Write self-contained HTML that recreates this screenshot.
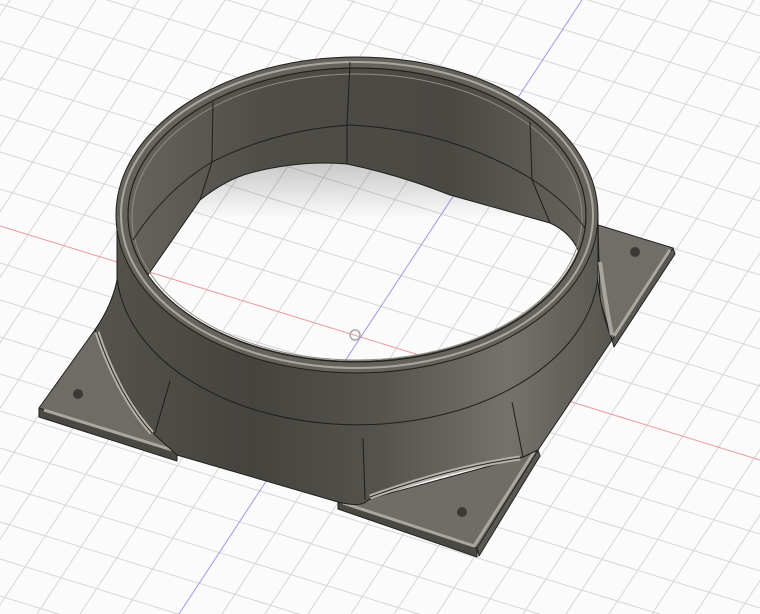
<!DOCTYPE html>
<html><head><meta charset="utf-8"><style>html,body{margin:0;padding:0;background:#fbfbfb;overflow:hidden;width:760px;height:614px}svg{display:block}</style></head>
<body>
<svg width="760" height="614" viewBox="0 0 760 614" xmlns="http://www.w3.org/2000/svg">
<defs>
<g id="grid" stroke="#d6d6d6" stroke-width="1" fill="none">
<path d="M0,-329 L760,-95 M0,-292 L760,-58 M0,-255 L760,-21 M0,-218 L760,16 M0,-181 L760,53 M0,-144 L760,90 M0,-107 L760,127 M0,-70 L760,164 M0,-33 L760,201 M0,4 L760,238 M0,41 L760,275 M0,78 L760,312 M0,115 L760,349 M0,152 L760,386 M0,189 L760,423 M0,263 L760,497 M0,300 L760,534 M0,337 L760,571 M0,374 L760,608 M0,411 L760,645 M0,448 L760,682 M0,485 L760,719 M0,522 L760,756 M0,559 L760,793 M0,596 L760,830"/>
<path d="M10,0 L-393,614 M53,0 L-350,614 M96,0 L-307,614 M139,0 L-264,614 M182,0 L-221,614 M225,0 L-178,614 M268,0 L-135,614 M311,0 L-92,614 M354,0 L-49,614 M397,0 L-6,614 M440,0 L37,614 M483,0 L80,614 M526,0 L123,614 M625,0 L222,614 M668,0 L265,614 M711,0 L308,614 M754,0 L351,614 M797,0 L394,614 M840,0 L437,614 M883,0 L480,614 M926,0 L523,614 M969,0 L566,614 M1012,0 L609,614 M1055,0 L652,614 M1098,0 L695,614 M1141,0 L738,614 M1184,0 L781,614"/>
<line x1="0" y1="226" x2="760" y2="460" stroke="#ec9a9a"/>
<line x1="582" y1="0" x2="179" y2="614" stroke="#9a9ae6"/>
</g>
<linearGradient id="body" x1="0" y1="0" x2="1" y2="0">
<stop offset="0" stop-color="#55534d"/><stop offset="0.3" stop-color="#45433e"/><stop offset="0.55" stop-color="#55534d"/><stop offset="0.8" stop-color="#74726b"/><stop offset="1" stop-color="#57554f"/>
</linearGradient>
<linearGradient id="inner" x1="0" y1="0" x2="1" y2="0">
<stop offset="0" stop-color="#66645d"/><stop offset="0.3" stop-color="#4f4d47"/><stop offset="0.7" stop-color="#4a4843"/><stop offset="1" stop-color="#66645d"/>
</linearGradient>
<linearGradient id="hs" x1="0" y1="0" x2="0" y2="1">
<stop offset="0" stop-color="#000" stop-opacity="0.25"/><stop offset="0.3" stop-color="#000" stop-opacity="0"/>
</linearGradient>
<clipPath id="holeclip"><path d="M148,275 L200,200 Q225,180 250,173 Q300,160 347,164 Q400,175 450,195 L550,223 Q570,232 578,250 A229,147 0 0 1 148,275 Z"/></clipPath>
</defs>
<rect width="760" height="614" fill="#fbfbfb"/>
<use href="#grid"/>

<g stroke="#222" stroke-width="1" stroke-linejoin="round">
<polygon points="39,408 177,452 177,461 39,417" fill="#4a4843"/>
<polygon points="39,408 97,327 155,435 177,452" fill="#6f6c65"/>
<polyline points="44,410 172,450" stroke="#aaa79f" stroke-width="3" fill="none"/>
<polygon points="338,500 477,548 477,557 338,509" fill="#4a4843"/>
<polygon points="477,548 538,450 540,456 479,556" fill="#5a5852"/>
<polygon points="338,500 477,548 538,450 523,457 365,500" fill="#706d66"/>
<polyline points="343,503 474,546 534,452" stroke="#aaa79f" stroke-width="3" fill="none"/>
<polygon points="673,248 612,340 614,347 675,254" fill="#5a5852"/>
<polygon points="598,225 673,248 612,340 600,300" fill="#716e67"/>
<polyline points="670,250 614,336" stroke="#aaa79f" stroke-width="3" fill="none"/>
</g>
<g fill="#3a3935"><circle cx="78" cy="394" r="5"/><circle cx="462" cy="512" r="5"/><circle cx="635" cy="252" r="5"/></g>

<path d="M117,215 L117,280 Q112,305 95,330 Q120,390 155,435 L177,455 L338,502 Q362,508 368,500 Q450,470 523,457 L538,450 L612,340 Q600,310 598,280 L598,215 A241,158 0 0 0 117,215 Z" fill="url(#body)" stroke="#1e1e1c" stroke-width="1"/>
<g fill="none" stroke-width="1">
<path d="M97,332 Q118,395 152,433" stroke="#b4b1a9" stroke-width="5"/>
<path d="M97,332 Q118,395 152,433" stroke="#222"/>
<path d="M370,497 Q450,468 520,458" stroke="#b4b1a9" stroke-width="5"/>
<path d="M370,497 Q450,468 520,458" stroke="#222"/>
<path d="M600,262 Q606,305 612,335" stroke="#a8a59d" stroke-width="4"/>
</g>
<g fill="none" stroke="#1e1e1c" stroke-width="1">
<path d="M117,277 A241,158 0 0 0 598,277"/>
<path d="M170,381 L155,433"/>
<path d="M363,438 L365,500"/>
<path d="M512,402 L523,457"/>
</g>
<ellipse cx="357" cy="215" rx="241" ry="158" fill="#65635c" stroke="#1e1e1c"/>
<ellipse cx="357" cy="215" rx="236" ry="153" fill="none" stroke="#a9a69e" stroke-width="2"/>
<ellipse cx="357" cy="215" rx="229" ry="147" fill="url(#inner)" stroke="#1e1e1c"/>
<path d="M148,275 L200,200 Q225,180 250,173 Q300,160 347,164 Q400,175 450,195 L550,223 Q570,232 578,250 A229,147 0 0 1 148,275 Z" fill="#fbfbfb"/>
<g clip-path="url(#holeclip)"><use href="#grid"/><rect x="100" y="150" width="520" height="230" fill="url(#hs)"/></g>
<path d="M148,275 L200,200 Q225,180 250,173 Q300,160 347,164 Q400,175 450,195 L550,223 Q570,232 578,250" fill="none" stroke="#1e1e1c"/>
<ellipse cx="357" cy="215" rx="229" ry="147" fill="none" stroke="#1e1e1c"/>
<ellipse cx="357" cy="217" rx="225" ry="143" fill="none" stroke="#8f8c84" stroke-width="1"/>
<g fill="none" stroke="#1e1e1c" stroke-width="1">
<path d="M133,240 Q165,190 212,162 Q275,130 350,125 Q450,130 530,178 Q565,200 585,228"/>
<path d="M213,102 L212,162 L200,200"/>
<path d="M350,62 L347,125 L347,164"/>
<path d="M530,122 L532,180 L550,223"/>
</g>
<circle cx="355" cy="335" r="5" fill="none" stroke="#aaa" stroke-width="1.5"/>
</svg>
</body></html>
